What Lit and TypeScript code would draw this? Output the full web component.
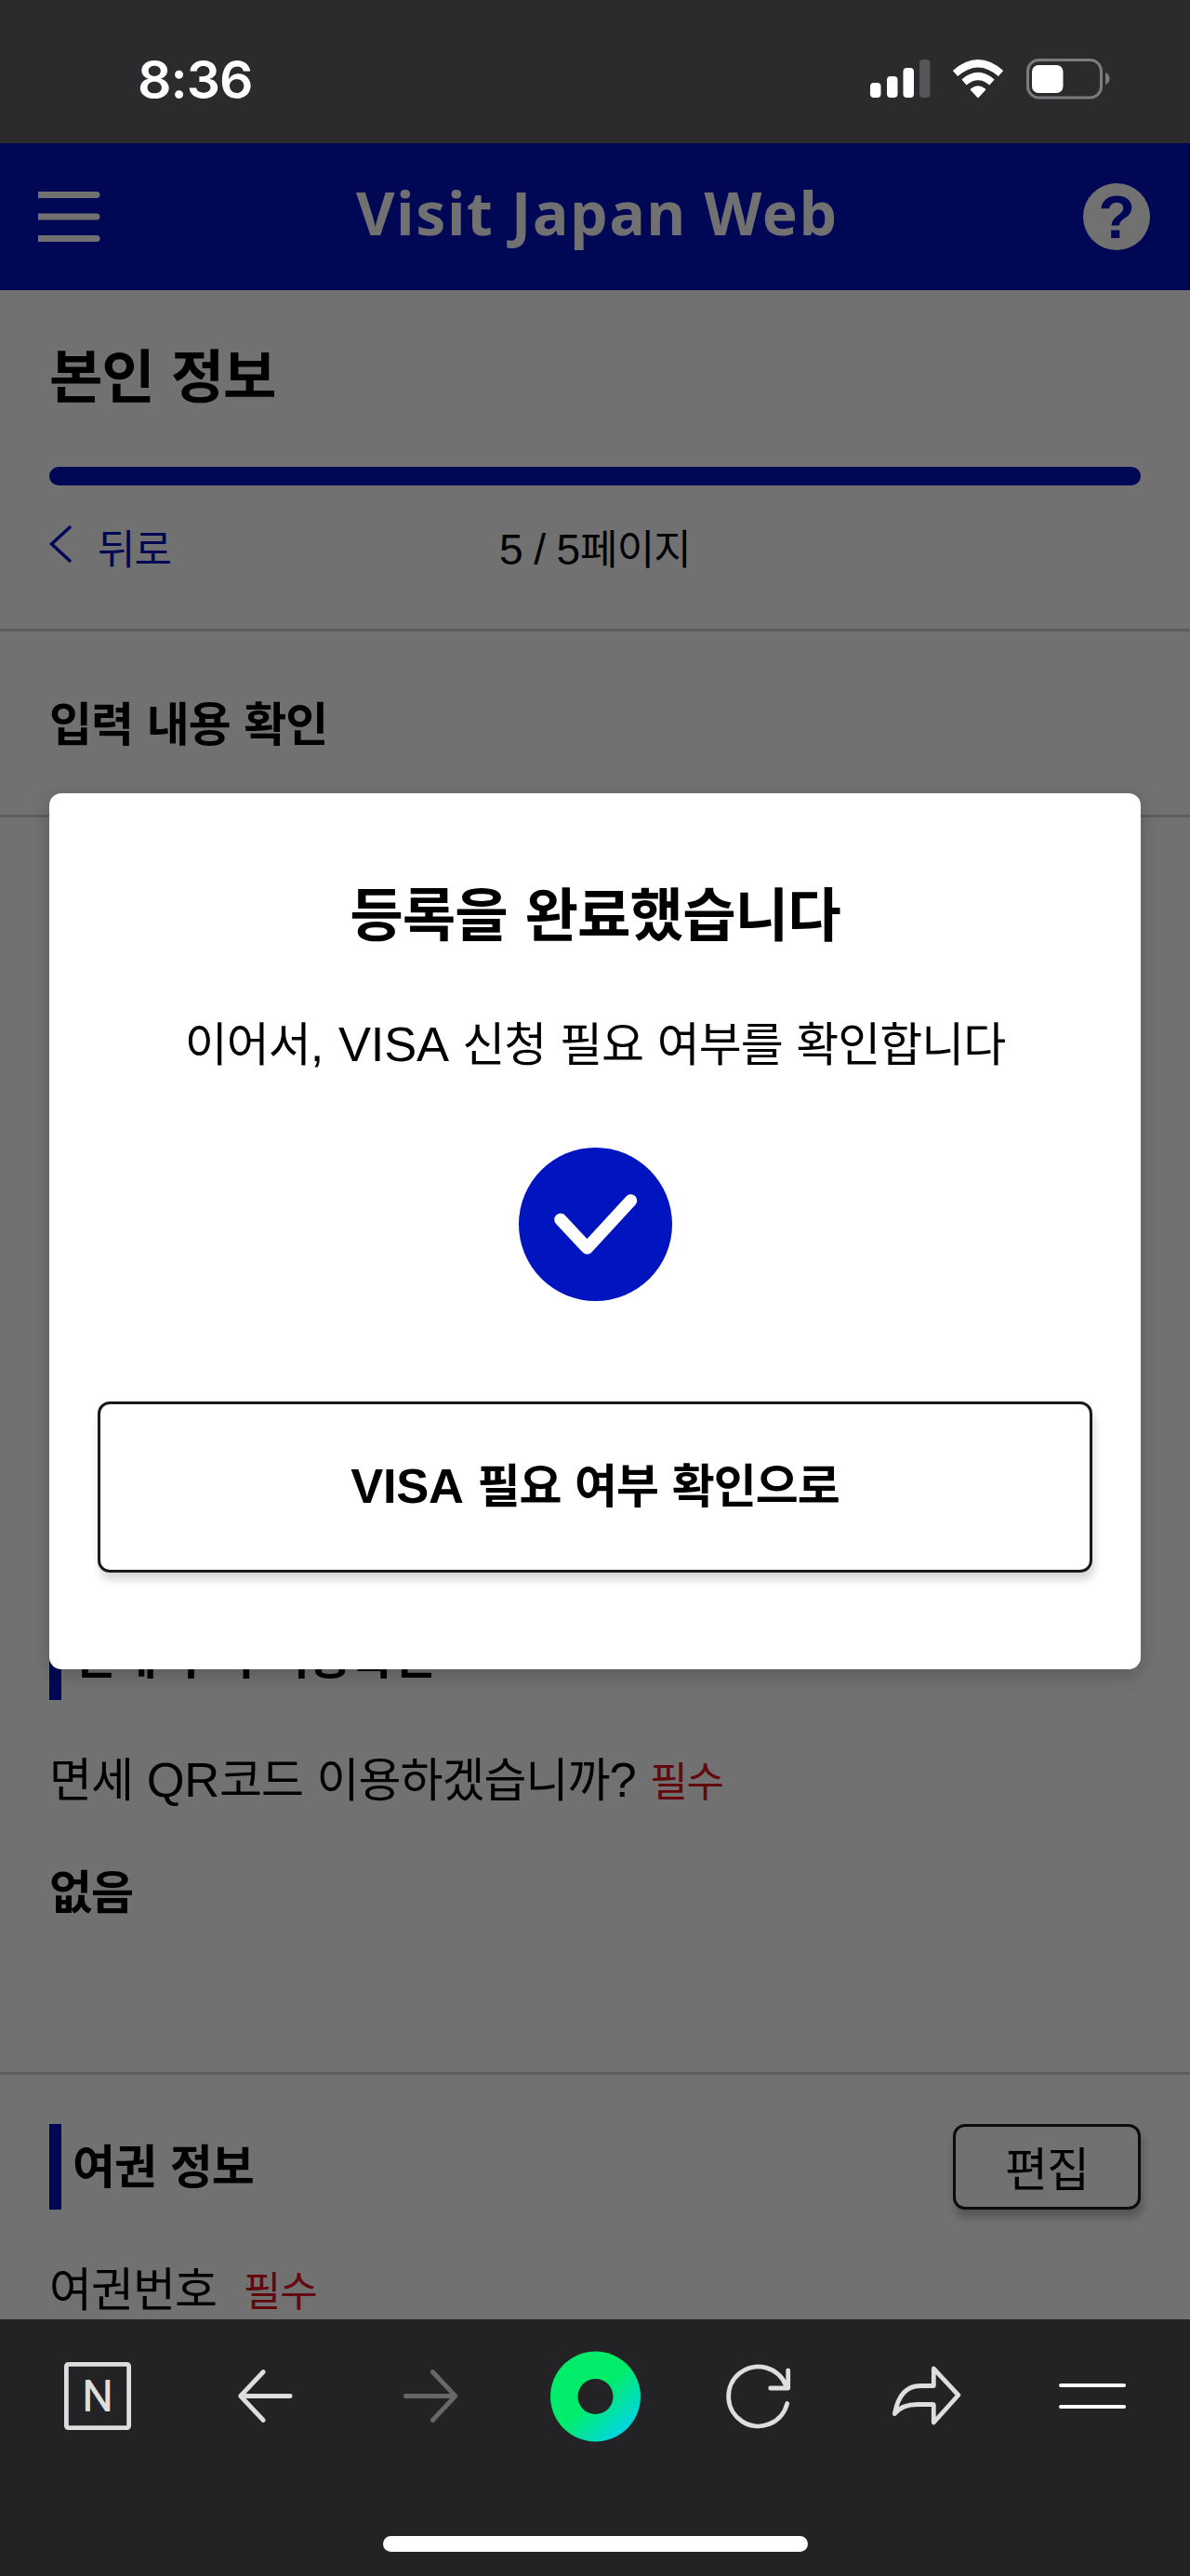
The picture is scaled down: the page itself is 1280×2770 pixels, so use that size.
import { LitElement, html, css, svg } from "lit";
import { customElement } from "lit/decorators.js";

@customElement("status-bar")
class StatusBar extends LitElement {
  static styles = css`
    :host { display: flex; justify-content: space-between; align-items: center; height: 154px; box-sizing: border-box; padding: 16px 84px 0 148px; background: #2b2b2d; color: #fff; }
    .time { font: 600 57px/1 Inter, "Liberation Sans", sans-serif; letter-spacing: -1px; }
    svg { display: block; }
  `;
  render() {
    return html`
      <span class="time">8:36</span>
      <svg width="262" height="46" viewBox="934 62 262 46">
        <g fill="#fff">
          <rect x="936" y="89" width="11.5" height="16" rx="4" />
          <rect x="954" y="82" width="11.5" height="23" rx="4" />
          <rect x="971.5" y="73" width="11.5" height="32" rx="4" />
          <rect x="989" y="64" width="11.5" height="41" rx="4" fill="#565658" />
          <path d="M1052 105.5 L1043.8 96.8 Q1043.4 95.8 1044.4 95.2 Q1052 89.5 1059.6 95.2 Q1060.6 95.8 1060.2 96.8 Z" />
        </g>
        <g fill="none" stroke="#fff" stroke-width="8">
          <path d="M1037 88.5 Q1052 75.5 1067 88.5" />
          <path d="M1027.5 79 Q1052 57.5 1076.5 79" />
        </g>
        <rect x="1105.5" y="64.5" width="79" height="40.5" rx="12" fill="none" stroke="#7c7c7e" stroke-width="3" />
        <rect x="1110" y="70" width="33.5" height="30" rx="7" fill="#fff" />
        <path d="M1189 78 Q1193.5 80 1193.5 84.5 Q1193.5 89 1189 91 Z" fill="#7c7c7e" />
      </svg>
    `;
  }
}

@customElement("site-header")
class SiteHeader extends LitElement {
  static styles = css`
    :host { display: flex; justify-content: space-between; align-items: center; height: 158px; box-sizing: border-box; padding: 0 43px 0 41px; background: #0014c0; color: #fff; }
    .title { font: 700 64px/1 "Noto Sans", "Open Sans", sans-serif; letter-spacing: 1.8px; padding-bottom: 9px; margin-left: 12px; }
    svg { display: block; }
    .mark { font: 700 65px "Liberation Sans", sans-serif; }
  `;
  render() {
    return html`
      <svg width="67" height="56" viewBox="0 0 67 56" fill="#fff">
        <path d="M0 1h63a3.5 3.5 0 0 1 0 7H0zM0 24.5h63a3.5 3.5 0 0 1 0 7H0zM0 48h63a3.5 3.5 0 0 1 0 7H0z" />
      </svg>
      <span class="title">Visit Japan Web</span>
      <svg width="72" height="72" viewBox="0 0 72 72">
        <circle cx="36" cy="36" r="36" fill="#fff" />
        <text class="mark" x="36" y="59" text-anchor="middle" fill="#0014c0">?</text>
      </svg>
    `;
  }
}

const koreanText = css`
  :host { font: 400 50px/60px "Liberation Sans", "Noto Sans CJK KR", sans-serif; }
  .t { letter-spacing: -0.02em; word-spacing: 0.035em; white-space: nowrap; }
  .lat { font-size: 1.05em; line-height: 1; letter-spacing: -0.005em; }
  .bold { font-weight: 700; }
`;

@customElement("registration-page")
class RegistrationPage extends LitElement {
  static styles = [koreanText, css`
    :host { display: flex; flex-direction: column; height: 2182px; overflow: hidden; background: #fff; color: #000; }
    .top { height: 364px; padding: 59px 53px 0; box-sizing: border-box; }
    .title { font-size: 62.5px; line-height: 70px; }
    .bar { height: 20px; border-radius: 10px; background: #0014c0; margin-top: 61px; }
    .nav { display: grid; grid-template-columns: 1fr auto 1fr; margin-top: 40px; font-size: 44px; line-height: 60px; word-spacing: -0.02em; }
    .back { display: flex; gap: 27px; color: #0014c0; }
    .back svg { margin-top: 3px; }
    .section { border-top: 3px solid #d2d2d2; box-sizing: border-box; height: 200px; padding: 71px 53px 0; }
    .gap { border-top: 3px solid #d2d2d2; height: 857px; }
    .head { display: flex; flex: none; height: 92px; margin: 0 53px; border-left: 13px solid #0014c0; padding: 2px 0 0 12px; box-sizing: border-box; align-items: center; justify-content: space-between; }
    .field { flex: none; margin: 0 53px; height: 60px; }
    .req { font-size: 44px; color: #e0141c; }
    .wide { margin-left: 14px; }
    .edit { width: 202px; height: 92px; margin-top: -2px; box-sizing: border-box; border: 3px solid #1a1a1a; border-radius: 13px; display: flex; align-items: center; justify-content: center; padding-top: 8px; background: #fff; box-shadow: 2px 8px 10px rgba(0,0,0,.25); font-weight: 400; }
    .q { margin-top: 57px; }
    .a { margin-top: 61px; }
    .rule { height: 3px; flex: none; background: #d2d2d2; margin: 162px 0 53px; }
    .p { margin-top: 57px; }
  `];
  render() {
    return html`
      <div class="top">
        <div class="title t bold">본인 정보</div>
        <div class="bar"></div>
        <div class="nav t">
          <span class="back">
            <svg width="25" height="40" viewBox="0 0 25 40" fill="none" stroke="#0014c0" stroke-width="3.5" stroke-linecap="round"><path d="M22 2 2.5 20 22 38" /></svg>
            <span>뒤로</span>
          </span>
          <span><span class="lat">5 / 5</span>페이지</span>
        </div>
      </div>
      <div class="section t bold">입력 내용 확인</div>
      <div class="gap"></div>
      <div class="head t bold"><span>면세 구비 이용확인</span></div>
      <div class="field t q">면세 <span class="lat">QR</span>코드 이용하겠습니까<span class="lat">?</span> <span class="req">필수</span></div>
      <div class="field t a bold">없음</div>
      <div class="rule"></div>
      <div class="head t bold"><span>여권 정보</span><span class="edit">편집</span></div>
      <div class="field t p">여권번호 <span class="req wide">필수</span></div>
    `;
  }
}

@customElement("complete-dialog")
class CompleteDialog extends LitElement {
  static styles = [koreanText, css`
    :host { display: flex; flex-direction: column; align-items: center; width: 1174px; height: 942px; box-sizing: border-box; padding: 96.5px 52px 0; background: #fff; border-radius: 13px; box-shadow: 0 6px 20px rgba(0,0,0,.2); color: #000; }
    .title { font-size: 62.5px; line-height: 70px; letter-spacing: -0.015em; }
    .text { margin-top: 74px; height: 60px; }
    svg { display: block; margin-top: 80px; }
    .go { margin-top: 108px; width: 1070px; height: 184px; box-sizing: border-box; border: 3px solid #1a1a1a; border-radius: 13px; display: flex; align-items: center; justify-content: center; box-shadow: 2px 8px 10px rgba(0,0,0,.16); }
  `];
  render() {
    return html`
      <div class="t bold title">등록을 완료했습니다</div>
      <div class="text t">이어서<span class="lat">, VISA</span> 신청 필요 여부를 확인합니다</div>
      <svg width="165" height="165" viewBox="557.5 1233.5 165 165">
        <circle cx="640" cy="1316" r="82.5" fill="#0014c0" />
        <path d="M602.5 1311 631 1341.5 678 1290.5" fill="none" stroke="#fff" stroke-width="13.5" stroke-linecap="round" stroke-linejoin="round" />
      </svg>
      <div class="go"><span class="t bold"><span class="lat">VISA</span> 필요 여부 확인으로</span></div>
    `;
  }
}

const line = (d: string) => svg`<path d=${d} />`;

@customElement("browser-toolbar")
class BrowserToolbar extends LitElement {
  static styles = css`
    :host { display: flex; flex-direction: column; align-items: center; height: 276px; background: #232325; }
    .icons { display: flex; align-items: center; justify-content: space-between; width: 1156px; height: 100px; margin-top: 33px; }
    svg { display: block; flex: none; fill: none; stroke: #dedee0; stroke-width: 4.8; stroke-linecap: round; stroke-linejoin: round; }
    .off { stroke: #68686a; }
    .n { font: 300 43px Inter, sans-serif; fill: #dedee0; stroke-width: 1.8; }
    .dot { stroke: none; margin: 0 -7px; }
    .menu { stroke: #fff; stroke-width: 4; }
    .home { width: 457px; height: 17px; border-radius: 9px; background: #fff; margin-top: 100px; }
  `;
  render() {
    return html`
      <div class="icons">
        <svg width="86" height="100" viewBox="62 2527 86 100">
          <rect x="71.4" y="2542.4" width="67.2" height="68.2" rx="2" />
          <text class="n" x="105" y="2592.3" text-anchor="middle">N</text>
        </svg>
        <svg width="86" height="100" viewBox="240.3 2527 86 100">${line("M312.5 2576.5H259M283.5 2550.5 259 2576.5 283.5 2602.5")}</svg>
        <svg class="off" width="86" height="100" viewBox="418.7 2527 86 100">${line("M436 2576.5H489.5M465 2550.5 489.5 2576.5 465 2602.5")}</svg>
        <svg class="dot" width="100" height="100" viewBox="590 2527 100 100">
          <defs><linearGradient id="g" x1="0.3" y1="0.25" x2="0.9" y2="0.9"><stop offset="0.35" stop-color="#00ec6a" /><stop offset="1" stop-color="#00d2f0" /></linearGradient></defs>
          <circle cx="640.5" cy="2577" r="48.5" fill="url(#g)" />
          <circle cx="640.5" cy="2577" r="19" fill="#232325" />
        </svg>
        <svg width="86" height="100" viewBox="774.3 2527 86 100">${line("M846 2584.5A32 32 0 1 1 845 2566M847 2549V2568H828")}</svg>
        <svg width="86" height="100" viewBox="953.2 2527 86 100">${line("M961.5 2595.5C965 2577 974 2565.5 989 2565.5H1003.5V2547L1030 2575.5 1003.5 2605V2586.5Q1003.5 2585.5 1002 2585.5H986C974 2585.5 967 2588.5 961.5 2595.5Z")}</svg>
        <svg class="menu" width="86" height="100" viewBox="1132 2527 86 100">${line("M1141 2565H1209M1141 2588H1209")}</svg>
      </div>
      <div class="home"></div>
    `;
  }
}

@customElement("app-root")
class AppRoot extends LitElement {
  static styles = css`
    :host { display: block; width: 1280px; height: 2770px; overflow: hidden; }
    .view { position: relative; height: 2340px; overflow: hidden; }
    .shade { position: absolute; inset: 0; background: rgba(0,0,0,.555); display: flex; justify-content: center; align-items: flex-start; padding-top: 699px; box-sizing: border-box; }
  `;
  render() {
    return html`
      <status-bar></status-bar>
      <div class="view">
        <site-header></site-header>
        <registration-page></registration-page>
        <div class="shade"><complete-dialog></complete-dialog></div>
      </div>
      <browser-toolbar></browser-toolbar>
    `;
  }
}
